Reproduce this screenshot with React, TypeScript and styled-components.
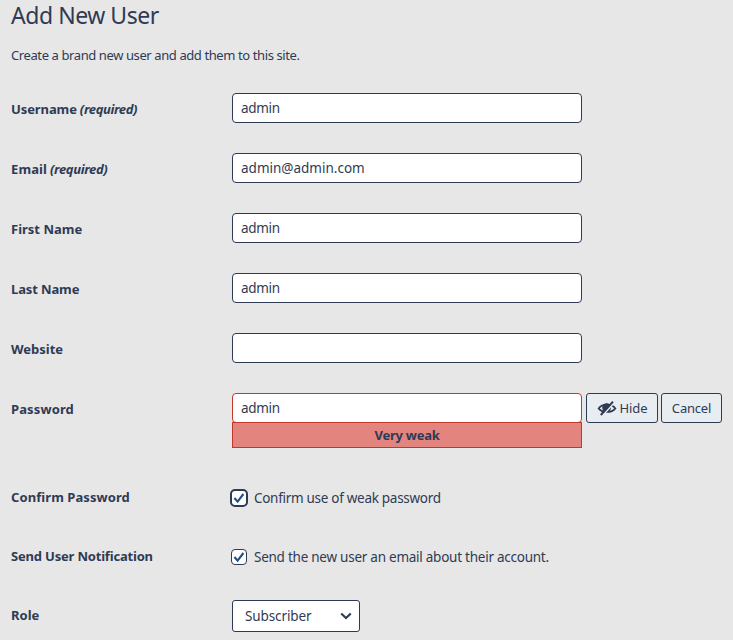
import React from 'react';
import styled, { createGlobalStyle } from 'styled-components';

const ink = '#2f3b54';
const sans = '"Noto Sans", "Open Sans", sans-serif';

const GlobalStyle = createGlobalStyle`
  *, *::before, *::after { box-sizing: border-box; }
  html, body { margin: 0; height: 100%; overflow: hidden; background: #e7e7e7; }
  body, input, button { font-family: ${sans}; color: ${ink}; }
`;

const Page = styled.main`
  height: 640px;
  padding-left: 11px;
  overflow: hidden;
`;

const Title = styled.h1`
  margin: 0;
  font-size: 23px;
  font-weight: 400;
  line-height: 30px;
  letter-spacing: -0.46px;
`;

const Intro = styled.p`
  margin: 15px 0 0;
  font-size: 13px;
  line-height: 20px;
  letter-spacing: -0.4px;
`;

const Form = styled.form`
  display: flex;
  flex-direction: column;
  padding-top: 28px;
`;

const Row = styled.div<{ $height?: number }>`
  display: flex;
  align-items: flex-start;
  height: ${(p) => p.$height ?? 60}px;
`;

const Label = styled.label<{ $spacing?: number; $top?: number }>`
  flex: 0 0 221px;
  padding-top: ${(p) => p.$top ?? 6}px;
  font-size: 13px;
  font-weight: 700;
  line-height: 20px;
  white-space: nowrap;
  letter-spacing: ${(p) => p.$spacing ?? 0}px;
`;

const Required = styled.em`
  letter-spacing: -0.36px;
`;

const TextInput = styled.input<{ $danger?: boolean; $spacing?: number }>`
  display: block;
  width: 350px;
  height: 30px;
  padding: 0 8px;
  border: 1px solid ${(p) => (p.$danger ? '#c0392b' : ink)};
  border-radius: 4px;
  outline: none;
  background: #fff;
  font-size: 13.5px;
  letter-spacing: ${(p) => p.$spacing ?? -0.3}px;
`;

const PasswordField = styled.div`
  display: flex;
  flex-direction: column;
`;

const Strength = styled.div`
  height: 26px;
  margin-top: -1px;
  border: 1px solid #c0392b;
  background: #e4847f;
  font-size: 13px;
  font-weight: 700;
  line-height: 25px;
  text-align: center;
  letter-spacing: -0.25px;
`;

const Buttons = styled.div`
  display: flex;
  gap: 3px;
  margin-left: 4px;
`;

const Button = styled.button<{ $width: number; $spacing: number }>`
  display: flex;
  align-items: center;
  justify-content: center;
  gap: 3px;
  width: ${(p) => p.$width}px;
  height: 30px;
  padding: 0;
  border: 1px solid ${ink};
  border-radius: 3px;
  background: #e8edf1;
  font-size: 13px;
  letter-spacing: ${(p) => p.$spacing}px;
`;

const CheckLabel = styled.label<{ $focused?: boolean }>`
  display: flex;
  align-items: center;
  gap: ${(p) => (p.$focused ? 6 : 7)}px;
  height: 20px;
  margin-top: 1px;
  margin-left: ${(p) => (p.$focused ? -2 : -1)}px;
  font-size: 13.5px;
  white-space: nowrap;
  letter-spacing: ${(p) => (p.$focused ? -0.29 : -0.25)}px;
`;

const CheckBox = styled.span<{ $focused?: boolean }>`
  display: flex;
  align-items: center;
  justify-content: center;
  width: ${(p) => (p.$focused ? 18 : 16)}px;
  height: ${(p) => (p.$focused ? 18 : 16)}px;
  border: ${(p) => (p.$focused ? 2 : 1)}px solid ${ink};
  border-radius: ${(p) => (p.$focused ? 5 : 4)}px;
  background: #fff;
`;

const Select = styled.div`
  display: flex;
  align-items: center;
  justify-content: space-between;
  width: 128px;
  height: 32px;
  padding: 0 6px 0 12px;
  border: 1px solid ${ink};
  border-radius: 3px;
  background: #fff;
  font-size: 13.5px;
  letter-spacing: -0.1px;
`;

const EyeOff = () => (
  <svg width="20" height="20" viewBox="0 0 20 20" aria-hidden="true">
    <path d="M1.6 10.4C5.4 5.4 14.6 5.4 18.4 10.4C14.6 15.2 5.4 15.2 1.6 10.4Z" fill="none" stroke={ink} strokeWidth="1.7" />
    <circle cx="9.6" cy="9.6" r="4.4" fill={ink} />
    <path d="M5.4 17.8L17.4 4.4" stroke="#e8edf1" strokeWidth="1.6" />
    <path d="M3.8 17L16 3.6" stroke={ink} strokeWidth="2" />
  </svg>
);

const Check = () => (
  <svg width="14" height="14" viewBox="0 0 14 14" aria-hidden="true">
    <path d="M2.4 7L5.6 10.6L11.4 3" fill="none" stroke="#205081" strokeWidth="2.1" />
  </svg>
);

const Chevron = () => (
  <svg width="14" height="14" viewBox="0 0 14 14" aria-hidden="true">
    <path d="M2.2 4.4L7 9L11.8 4.4" fill="none" stroke={ink} strokeWidth="2.1" />
  </svg>
);

const fields = [
  { label: 'Username', value: 'admin', required: true, spacing: -0.1 },
  { label: 'Email', value: 'admin@admin.com', required: true, spacing: 0.1, inputSpacing: 0 },
  { label: 'First Name', value: 'admin' },
  { label: 'Last Name', value: 'admin', spacing: -0.12 },
  { label: 'Website', value: '' },
];

export default function App() {
  return (
    <Page>
      <GlobalStyle />
      <Title>Add New User</Title>
      <Intro>Create a brand new user and add them to this site.</Intro>
      <Form>
        {fields.map((f) => (
          <Row key={f.label}>
            <Label $spacing={f.spacing}>
              {f.label}
              {f.required && <Required> (required)</Required>}
            </Label>
            <TextInput defaultValue={f.value} $spacing={f.inputSpacing} aria-label={f.label} />
          </Row>
        ))}
        <Row $height={94}>
          <Label $spacing={0.12}>Password</Label>
          <PasswordField>
            <TextInput $danger defaultValue="admin" aria-label="Password" />
            <Strength>Very weak</Strength>
          </PasswordField>
          <Buttons>
            <Button type="button" $width={72} $spacing={-0.1}>
              <EyeOff />
              Hide
            </Button>
            <Button type="button" $width={61} $spacing={-0.2}>Cancel</Button>
          </Buttons>
        </Row>
        <Row $height={59}>
          <Label $top={0} $spacing={0.08}>Confirm Password</Label>
          <CheckLabel $focused>
            <CheckBox $focused><Check /></CheckBox>
            Confirm use of weak password
          </CheckLabel>
        </Row>
        <Row $height={54}>
          <Label $top={0} $spacing={-0.19}>Send User Notification</Label>
          <CheckLabel>
            <CheckBox><Check /></CheckBox>
            Send the new user an email about their account.
          </CheckLabel>
        </Row>
        <Row $height={40}>
          <Label $top={5}>Role</Label>
          <Select role="combobox">
            Subscriber
            <Chevron />
          </Select>
        </Row>
      </Form>
    </Page>
  );
}
